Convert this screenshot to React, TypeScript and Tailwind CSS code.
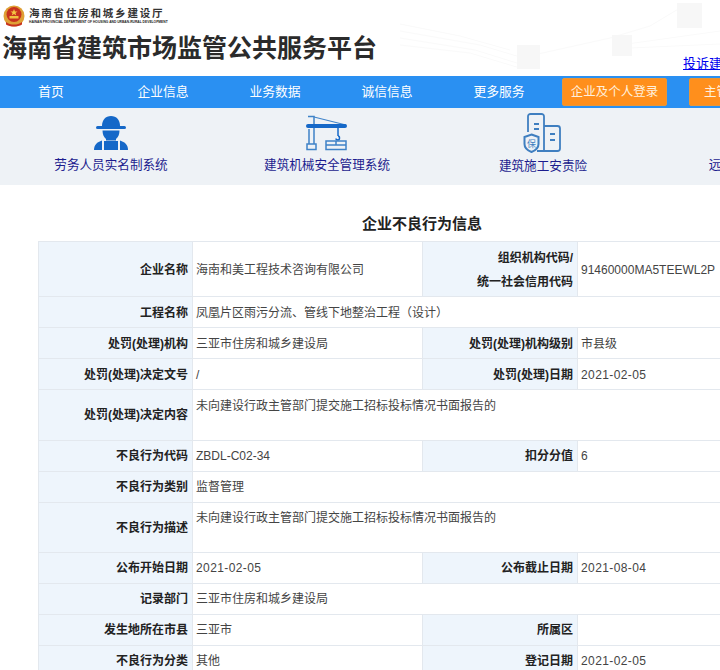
const cjk = "font-['Liberation_Sans','Noto_Sans_CJK_SC',sans-serif]";

type Row = {
  height: string;
  label: string;
  value: string;
  label2?: string[];
  value2?: string;
  top?: string;
  shift?: boolean;
};

const rows: Row[] = [
  { height: "h-[55px]", label: "企业名称", value: "海南和美工程技术咨询有限公司", label2: ["组织机构代码/", "统一社会信用代码"], value2: "91460000MA5TEEWL2P", shift: true },
  { height: "h-[31px]", label: "工程名称", value: "凤凰片区雨污分流、管线下地整治工程（设计）", shift: true },
  { height: "h-[31px]", label: "处罚(处理)机构", value: "三亚市住房和城乡建设局", label2: ["处罚(处理)机构级别"], value2: "市县级", shift: true },
  { height: "h-[31px]", label: "处罚(处理)决定文号", value: "/", label2: ["处罚(处理)日期"], value2: "2021-02-05", shift: true },
  { height: "h-[51px]", label: "处罚(处理)决定内容", value: "未向建设行政主管部门提交施工招标投标情况书面报告的", top: "pb-[18px]" },
  { height: "h-[31px]", label: "不良行为代码", value: "ZBDL-C02-34", label2: ["扣分分值"], value2: "6" },
  { height: "h-[31px]", label: "不良行为类别", value: "监督管理" },
  { height: "h-[50px]", label: "不良行为描述", value: "未向建设行政主管部门提交施工招标投标情况书面报告的", top: "pb-[20px]" },
  { height: "h-[31px]", label: "公布开始日期", value: "2021-02-05", label2: ["公布截止日期"], value2: "2021-08-04" },
  { height: "h-[31px]", label: "记录部门", value: "三亚市住房和城乡建设局" },
  { height: "h-[31px]", label: "发生地所在市县", value: "三亚市", label2: ["所属区"], value2: "" },
  { height: "h-[31px]", label: "不良行为分类", value: "其他", label2: ["登记日期"], value2: "2021-02-05" }
];

const navItems = ["首页", "企业信息", "业务数据", "诚信信息", "更多服务"];

function Emblem() {
  return (
    <svg width="22" height="22" viewBox="0 0 22 22" className="shrink-0">
      <circle cx="11" cy="11" r="10.5" fill="#dfa035" />
      <circle cx="11" cy="9.500" r="7.500" fill="#c8321e" />
      <path d="M11 4l1 2.400 2.500.1-2 1.500.8 2.400-2.300-1.400-2.300 1.400.8-2.400-2-1.500 2.500-.1z" fill="#f4c542" />
      <rect x="6.500" y="11" width="9" height="2.500" fill="#f0c040" />
      <path d="M3 17c2.500 2 5 2.500 8 2.500s5.500-.5 8-2.500v2.500c-2.500 1.500-5 2-8 2s-5.500-.5-8-2z" fill="#c8321e" />
    </svg>
  );
}

function WorkerIcon() {
  return (
    <svg width="34" height="36" viewBox="0 0 34 36" fill="#1568c8">
      <path d="M8 11c0-6 3.500-10 9-10s9 4 9 10z" />
      <rect x="2" y="11" width="30" height="3" rx="1.500" />
      <path d="M8.500 15.500h17c0 4-1.500 7-3.500 8.500v1.500h-10V24c-2-1.500-3.500-4.500-3.500-8.500z" />
      <path d="M0 35c0-5 3-8 8-9.500V35z" />
      <path d="M34 35c0-5-3-8-8-9.500V35z" />
      <path d="M10 26h14v9H10z" />
    </svg>
  );
}

function CraneIcon() {
  return (
    <svg width="42" height="36" viewBox="0 0 42 36" fill="none" stroke="#3f83c8" strokeWidth="1.500">
      <path d="M2 1.500h6V14M3 14v15M8 14v15" />
      <path d="M8 2l32 8" strokeWidth="1.200" />
      <rect x="0" y="9" width="41" height="4" rx="2" fill="#1568c8" stroke="none" />
      <rect x="1" y="29" width="9" height="5.500" />
      <path d="M32 13v8" stroke="#1568c8" />
      <path d="M32 21c2 0 2 4 0 4s-2-1-2-1.500" stroke="#1568c8" />
      <rect x="20" y="26" width="20" height="8.500" />
      <path d="M20 30h20M30 26v4" />
    </svg>
  );
}

function InsuranceIcon() {
  return (
    <svg width="38" height="40" viewBox="0 0 38 40" fill="none" stroke="#3f7fc0" strokeWidth="1.800" className="mr-[2px]">
      <path d="M5 19V3.500A2.500 2.500 0 0 1 7.500 1h11A2.500 2.500 0 0 1 21 3.500V38" />
      <path d="M21 13h13.500a2.500 2.500 0 0 1 2.500 2.500V35.500a2.500 2.500 0 0 1-2.500 2.500H14" />
      <path d="M11 11h5M11 16h5M27 21h5M27 27h5" strokeWidth="1.800" />
      <path d="M8.500 21.500l7 2.500v7c0 4-3 6.500-7 8-4-1.500-7-4-7-8v-7z" fill="#eef2f6" strokeWidth="2" />
      <text x="8.500" y="34" textAnchor="middle" fontSize="9" fill="#3f7fc0" stroke="none">保</text>
    </svg>
  );
}

function HeaderPattern() {
  return (
    <svg className="absolute left-0 top-0" width="720" height="76" viewBox="0 0 720 76" fill="none" stroke="#fafafa" strokeWidth="1">
      <path d="M400 24l60 12 50 14 M400 31l80 14 40 12 M400 38l75 12 45 14 M400 45l70 8 50 15" />
      <path d="M520 58l90-20 40-12 30-18 M620 45l100-14 M630 48l90-4" />
      <rect x="517" y="45" width="23" height="24" fill="#f7f7f7" stroke="none" />
      <rect x="612" y="35" width="20" height="21" fill="#f7f7f7" stroke="none" />
      <rect x="677" y="3" width="25" height="25" fill="#f7f7f7" stroke="none" />
    </svg>
  );
}

function BandItem(props: { icon: React.ReactNode; label: string; low?: boolean }) {
  return (
    <a className="flex w-[216px] shrink-0 flex-col items-center text-[12.600px] text-[#1c1c8e]">
      <div className="flex h-[47px] items-center">{props.icon}</div>
      <span className={props.low ? "mt-[1px] leading-[18px]" : "leading-[18px]"}>{props.label}</span>
    </a>
  );
}

export default function App() {
  return (
    <div className={`${cjk} h-[670px] w-[720px] overflow-hidden bg-white`}>
      <header className="relative h-[76px]">
        <HeaderPattern />
        <div className="relative flex h-[30px] items-center gap-[4px] pl-[3px] pt-[2px]">
          <Emblem />
          <div className="flex flex-col">
            <span className="text-[10.500px] font-bold leading-[12px] tracking-[1.800px] text-[#333]">海南省住房和城乡建设厅</span>
            <span className="whitespace-nowrap text-[3.300px] font-bold leading-[6px] text-[#222]">HAINAN PROVINCIAL DEPARTMENT OF HOUSING AND URBAN-RURAL DEVELOPMENT</span>
          </div>
        </div>
        <h1 className="relative pl-[2px] text-[25px] font-bold leading-[36px] text-[#2b2b2b]">海南省建筑市场监管公共服务平台</h1>
        <a className="absolute left-[683px] top-[55px] whitespace-nowrap text-[13px] leading-[17px] text-[#0000ee] underline">投诉建议</a>
      </header>

      <nav className="flex h-[32px] items-center bg-[#2a90f2] text-[12.800px] text-white">
        <div className="ml-[-5px] flex">
          {navItems.map(item => (
            <a key={item} className="w-[112px] text-center leading-[32px]">{item}</a>
          ))}
        </div>
        <a className="ml-[7px] flex h-[28px] w-[105px] shrink-0 items-center justify-center rounded-[2px] border border-[#e8973a] bg-[#ff8f1c] text-[12.500px] text-[#fff0dd]">企业及个人登录</a>
        <a className="ml-[22px] flex h-[28px] w-[105px] shrink-0 items-center justify-center rounded-[2px] border border-[#e8973a] bg-[#ff8f1c] text-[12.500px] text-[#fff0dd]">主管部门登录</a>
      </nav>

      <div className="flex h-[77px] items-start bg-[#eef2f6] pl-[3px] pt-[1px]">
        <BandItem icon={<WorkerIcon />} label="劳务人员实名制系统" />
        <BandItem icon={<CraneIcon />} label="建筑机械安全管理系统" />
        <BandItem icon={<InsuranceIcon />} label="建筑施工安责险" low />
        <BandItem icon={null} label="远程视频监控系统" />
      </div>

      <h2 className="h-[56px] w-[844px] pt-[29px] text-center text-[15px] font-bold leading-[20px] text-[#222]">企业不良行为信息</h2>

      <table className="ml-[38px] w-[800px] table-fixed border-collapse text-[12px] text-[#444] [font-feature-settings:'chws'_0] [text-spacing-trim:space-all]">
        <colgroup>
          <col className="w-[154px]" />
          <col className="w-[230px]" />
          <col className="w-[155px]" />
          <col />
        </colgroup>
        <tbody>
          {rows.map(row => (
            <tr key={row.label} className={row.height}>
              <th className={`border border-[#e3e8ee] bg-[#eef5fc] pr-[4px] text-right text-[12px] font-bold text-[#222] ${row.shift ? "pt-[2px]" : ""}`}>{row.label}</th>
              <td colSpan={row.label2 ? 1 : 3} className={`border border-[#e3e8ee] pl-[3px] ${row.top ?? ""} ${row.shift ? "pt-[2px]" : ""} ${/^\d{4}-/.test(row.value) ? "tracking-[0.400px]" : ""}`}>{row.value}</td>
              {row.label2 && (
                <th className={`border border-[#e3e8ee] bg-[#eef5fc] pr-[4px] text-right text-[12px] font-bold leading-[24px] text-[#222] ${row.shift ? "pt-[2px]" : ""}`}>
                  {row.label2.map(line => <div key={line}>{line}</div>)}
                </th>
              )}
              {row.label2 && <td className={`border border-[#e3e8ee] pl-[3px] ${row.shift ? "pt-[2px]" : ""} ${/^\d{4}-/.test(row.value2 ?? "") ? "tracking-[0.400px]" : ""}`}>{row.value2}</td>}
            </tr>
          ))}
        </tbody>
      </table>
    </div>
  );
}
